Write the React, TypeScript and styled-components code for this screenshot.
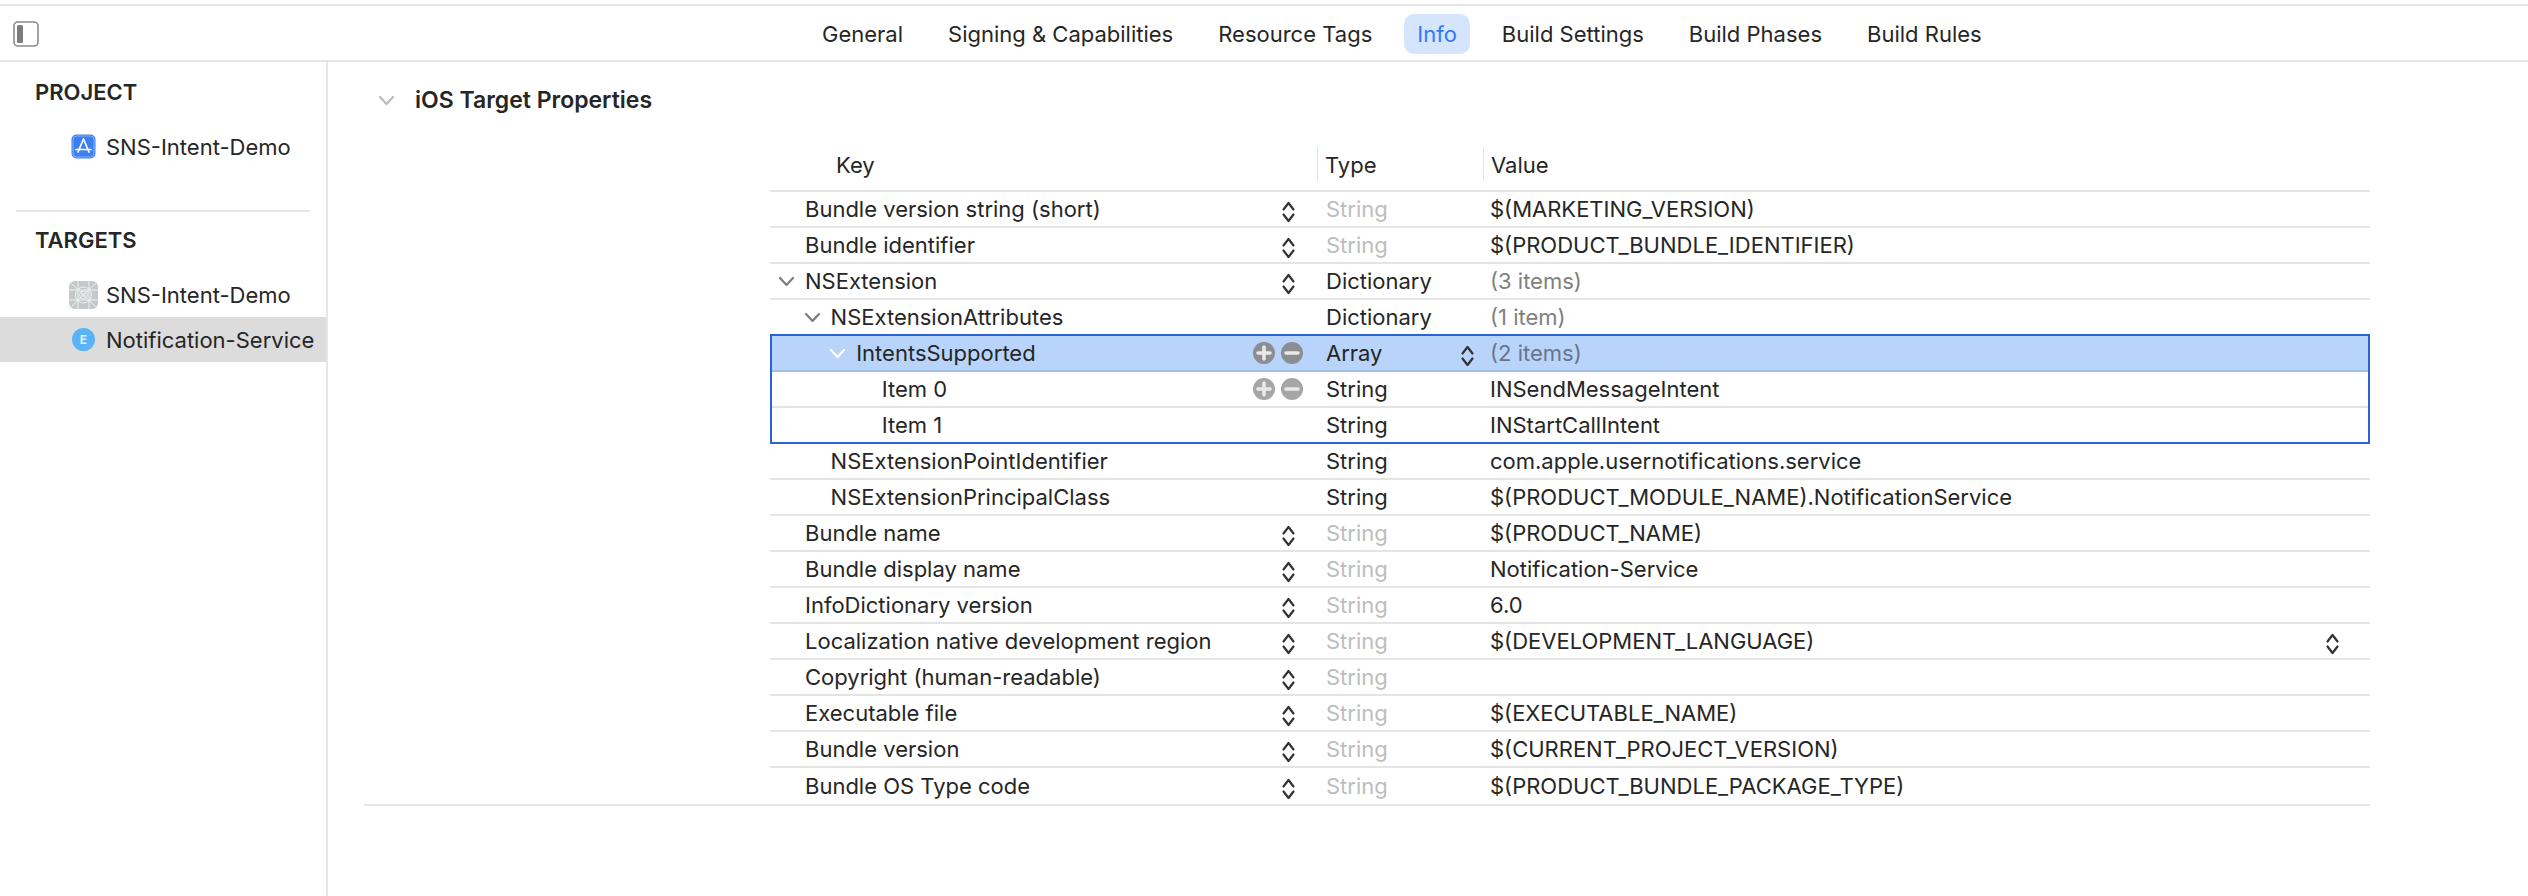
import React from "react";
import styled, { createGlobalStyle } from "styled-components";

const Global = createGlobalStyle`
  html, body { margin: 0; padding: 0; background: #fff; }
  body { font-family: Inter, "Noto Sans", "Liberation Sans", sans-serif; color: #262626; font-size: 22px; letter-spacing: 0; }
  * { box-sizing: border-box; }
`;

const Page = styled.div`
  width: 2528px;
  height: 896px;
  display: flex;
  flex-direction: column;
  padding-top: 4px;
  overflow: hidden;
`;

const Toolbar = styled.header`
  height: 58px;
  flex: none;
  border-top: 2px solid #e4e4e4;
  border-bottom: 2px solid #e4e4e4;
  display: flex;
  align-items: center;
  padding: 2px 0 0 13px;
`;

const ToggleBox = styled.svg`
  width: 26px;
  height: 26px;
  flex: none;
`;

const Tabs = styled.nav`
  display: flex;
  gap: 19px;
  margin-left: 770px;
`;

const Tab = styled.div<{ $active?: boolean }>`
  height: 40px;
  display: flex;
  align-items: center;
  padding: 0 13px;
  border-radius: 10px;
  white-space: nowrap;
  background: ${(p) => (p.$active ? "#d5e5fd" : "transparent")};
  color: ${(p) => (p.$active ? "#3478f6" : "#262626")};
`;

const Body = styled.div`
  flex: 1;
  display: flex;
  min-height: 0;
`;

const Sidebar = styled.aside`
  width: 328px;
  flex: none;
  border-right: 2px solid #e6e6e6;
  padding-top: 16px;
`;

const GroupLabel = styled.div`
  height: 28px;
  line-height: 28px;
  padding-left: 35px;
  margin-bottom: 18px;
  font-weight: 600;
`;

const SideItem = styled.div<{ $selected?: boolean }>`
  height: 45px;
  display: flex;
  align-items: center;
  gap: 8px;
  padding-left: 69px;
  white-space: nowrap;
  background: ${(p) => (p.$selected ? "#dcdcdc" : "transparent")};
`;

const IconSlot = styled.span`
  width: 29px;
  height: 29px;
  flex: none;
  display: flex;
  align-items: center;
  justify-content: center;
`;

const ExtensionBadge = styled.span`
  width: 23px;
  height: 23px;
  border-radius: 50%;
  background: #58b4f7;
  color: #d9efff;
  font-size: 12px;
  font-weight: 700;
  display: flex;
  align-items: center;
  justify-content: center;
`;

const SideDivider = styled.div`
  width: 294px;
  height: 2px;
  margin: 41px 0 14px 16px;
  background: #e6e6e6;
`;

const Main = styled.main`
  flex: 1;
  padding: 0 158px 0 36px;
`;

const Section = styled.section`
  border-bottom: 2px solid #e4e4e4;
`;

const SectionHead = styled.div`
  height: 86px;
  display: flex;
  align-items: center;
  padding: 0 0 10px 14px;
  gap: 20px;
  font-size: 23px;
  font-weight: 600;
`;

const Table = styled.div`
  margin-left: 406px;
`;

const HeadRow = styled.div`
  height: 44px;
  display: grid;
  grid-template-columns: 547px 166px 1fr;
  border-bottom: 2px solid #e4e4e4;
  padding-bottom: 10px;
`;

const HeadCell = styled.div<{ $first?: boolean }>`
  display: flex;
  align-items: center;
  padding: 2px 0 0 ${(p) => (p.$first ? "66px" : "7px")};
  border-left: ${(p) => (p.$first ? "none" : "1px solid #e4e4e4")};
`;

const Row = styled.div<{ $selected?: boolean; $last?: boolean }>`
  height: 36px;
  display: grid;
  grid-template-columns: 547px 166px 1fr;
  align-items: center;
  background: ${(p) => (p.$selected ? "#b8d4fb" : "transparent")};
  border-bottom: ${(p) =>
    p.$last ? "none" : `2px solid ${p.$selected ? "#a3bfe6" : "#e4e4e4"}`};
`;

const SelectionGroup = styled.div`
  position: relative;
  &::after {
    content: "";
    position: absolute;
    inset: -2px 0 0 0;
    border: 2px solid #2b62d9;
    pointer-events: none;
  }
`;

const KeyCell = styled.div<{ $level: number }>`
  display: flex;
  align-items: center;
  height: 100%;
  padding-left: ${(p) => 8 + p.$level * 25.6}px;
  white-space: nowrap;
`;

const ChevronSlot = styled.span`
  width: 27px;
  flex: none;
  display: flex;
  align-items: center;
`;

const KeyText = styled.span`
  flex: 1;
`;

const StepperWrap = styled.svg<{ $inset: number }>`
  width: 15px;
  height: 22px;
  flex: none;
  margin: 6px ${(p) => p.$inset}px 0 0;
`;

const TypeCell = styled.div<{ $muted?: boolean }>`
  display: flex;
  align-items: center;
  height: 100%;
  padding-left: 9px;
  color: ${(p) => (p.$muted ? "#bdbdbd" : "#262626")};
`;

const TypeText = styled.span`
  flex: 1;
`;

const ValueCell = styled.div<{ $count?: boolean; $selected?: boolean }>`
  display: flex;
  align-items: center;
  height: 100%;
  padding-left: 7px;
  white-space: nowrap;
  color: ${(p) => (p.$count ? (p.$selected ? "#69758a" : "#808080") : "#262626")};
`;

const ValueText = styled.span`
  flex: 1;
`;

const RoundControls = styled.span`
  display: flex;
  gap: 6px;
  margin-right: 14px;
`;

const RoundBtn = styled.svg`
  width: 22px;
  height: 22px;
  flex: none;
`;

const Stepper = ({ inset }: { inset: number }) => (
  <StepperWrap $inset={inset} viewBox="0 0 15 22" fill="none" stroke="#333" strokeWidth="2.2" strokeLinecap="round" strokeLinejoin="round">
    <path d="M2.5 8.5 L7.5 2 L12.5 8.5" />
    <path d="M2.5 13.5 L7.5 20 L12.5 13.5" />
  </StepperWrap>
);

const Chevron = ({ color }: { color: string }) => (
  <svg width="17" height="11" viewBox="0 0 17 11" fill="none" stroke={color} strokeWidth="2.2" strokeLinecap="round" strokeLinejoin="round">
    <path d="M2 2 L8.5 9 L15 2" />
  </svg>
);

const Round = ({ kind, color }: { kind: "plus" | "minus"; color: string }) => (
  <RoundBtn viewBox="0 0 22 22">
    <circle cx="11" cy="11" r="11" fill={color} />
    <path d={kind === "plus" ? "M5 11 H17 M11 5 V17" : "M5 11 H17"} stroke="#e9e9e9" strokeWidth="3.6" fill="none" strokeLinecap="round" />
  </RoundBtn>
);

const AppIcon = () => (
  <svg width="25" height="25" viewBox="0 0 25 25">
    <rect x="0.5" y="0.5" width="24" height="24" rx="5" fill="#3c7ff0" />
    <rect x="2" y="2" width="21" height="21" rx="3.5" fill="none" stroke="#a9c8f8" strokeWidth="0.7" />
    <path d="M12.5 5 L7 18 M12.5 5 L18 18 M5 15.5 H20" stroke="#fff" strokeWidth="1.7" fill="none" strokeLinecap="round" />
  </svg>
);

const TargetIcon = () => (
  <svg width="29" height="28" viewBox="0 0 29 28">
    <rect width="29" height="28" rx="6" fill="#c3c9ca" />
    <g fill="none" stroke="#eef0f0" strokeWidth="1">
      <circle cx="14.5" cy="14" r="4" />
      <circle cx="14.5" cy="14" r="8" />
      <circle cx="14.5" cy="14" r="1.6" />
      <path d="M0 0 L29 28 M29 0 L0 28 M9 0 V28 M20 0 V28 M0 9 H29 M0 19 H29" />
    </g>
  </svg>
);

type RowData = {
  key: string;
  level?: number;
  chevron?: boolean;
  stepper?: boolean;
  type: string;
  mutedType?: boolean;
  value?: string;
  count?: boolean;
  valueStepper?: boolean;
};

const before: RowData[] = [
  { key: "Bundle version string (short)", stepper: true, type: "String", mutedType: true, value: "$(MARKETING_VERSION)" },
  { key: "Bundle identifier", stepper: true, type: "String", mutedType: true, value: "$(PRODUCT_BUNDLE_IDENTIFIER)" },
  { key: "NSExtension", chevron: true, stepper: true, type: "Dictionary", value: "(3 items)", count: true },
  { key: "NSExtensionAttributes", level: 1, chevron: true, type: "Dictionary", value: "(1 item)", count: true },
];

const after: RowData[] = [
  { key: "NSExtensionPointIdentifier", level: 1, type: "String", value: "com.apple.usernotifications.service" },
  { key: "NSExtensionPrincipalClass", level: 1, type: "String", value: "$(PRODUCT_MODULE_NAME).NotificationService" },
  { key: "Bundle name", stepper: true, type: "String", mutedType: true, value: "$(PRODUCT_NAME)" },
  { key: "Bundle display name", stepper: true, type: "String", mutedType: true, value: "Notification-Service" },
  { key: "InfoDictionary version", stepper: true, type: "String", mutedType: true, value: "6.0" },
  { key: "Localization native development region", stepper: true, type: "String", mutedType: true, value: "$(DEVELOPMENT_LANGUAGE)", valueStepper: true },
  { key: "Copyright (human-readable)", stepper: true, type: "String", mutedType: true },
  { key: "Executable file", stepper: true, type: "String", mutedType: true, value: "$(EXECUTABLE_NAME)" },
  { key: "Bundle version", stepper: true, type: "String", mutedType: true, value: "$(CURRENT_PROJECT_VERSION)" },
  { key: "Bundle OS Type code", stepper: true, type: "String", mutedType: true, value: "$(PRODUCT_BUNDLE_PACKAGE_TYPE)" },
];

const PlainRow = ({ row, last }: { row: RowData; last?: boolean }) => (
  <Row $last={last}>
    <KeyCell $level={row.level ?? 0}>
      <ChevronSlot>{row.chevron && <Chevron color="#7d7d7d" />}</ChevronSlot>
      <KeyText>{row.key}</KeyText>
      {row.stepper && <Stepper inset={21} />}
    </KeyCell>
    <TypeCell $muted={row.mutedType}>
      <TypeText>{row.type}</TypeText>
    </TypeCell>
    <ValueCell $count={row.count}>
      <ValueText>{row.value}</ValueText>
      {row.valueStepper && <Stepper inset={30} />}
    </ValueCell>
  </Row>
);

const tabs = ["General", "Signing & Capabilities", "Resource Tags", "Info", "Build Settings", "Build Phases", "Build Rules"];

export default function App() {
  return (
    <Page>
      <Global />
      <Toolbar>
        <ToggleBox viewBox="0 0 26 26" fill="none">
          <rect x="1" y="1" width="24" height="24" rx="4" stroke="#8a8a8a" strokeWidth="1.6" />
          <rect x="4" y="4" width="6" height="18" rx="1.5" fill="#7c7c7c" />
        </ToggleBox>
        <Tabs>
          {tabs.map((t) => (
            <Tab key={t} $active={t === "Info"}>{t}</Tab>
          ))}
        </Tabs>
      </Toolbar>
      <Body>
        <Sidebar>
          <GroupLabel>PROJECT</GroupLabel>
          <SideItem>
            <IconSlot><AppIcon /></IconSlot>
            SNS-Intent-Demo
          </SideItem>
          <SideDivider />
          <GroupLabel>TARGETS</GroupLabel>
          <SideItem>
            <IconSlot><TargetIcon /></IconSlot>
            SNS-Intent-Demo
          </SideItem>
          <SideItem $selected>
            <IconSlot><ExtensionBadge>E</ExtensionBadge></IconSlot>
            Notification-Service
          </SideItem>
        </Sidebar>
        <Main>
          <Section>
            <SectionHead>
              <Chevron color="#bcbcbc" />
              iOS Target Properties
            </SectionHead>
            <Table>
              <HeadRow>
                <HeadCell $first>Key</HeadCell>
                <HeadCell>Type</HeadCell>
                <HeadCell>Value</HeadCell>
              </HeadRow>
              {before.map((r) => <PlainRow key={r.key} row={r} />)}
              <SelectionGroup>
                <Row $selected>
                  <KeyCell $level={2}>
                    <ChevronSlot><Chevron color="#ffffff" /></ChevronSlot>
                    <KeyText>IntentsSupported</KeyText>
                    <RoundControls>
                      <Round kind="plus" color="#8b8d90" />
                      <Round kind="minus" color="#8b8d90" />
                    </RoundControls>
                  </KeyCell>
                  <TypeCell>
                    <TypeText>Array</TypeText>
                    <Stepper inset={8} />
                  </TypeCell>
                  <ValueCell $count $selected>
                    <ValueText>(2 items)</ValueText>
                  </ValueCell>
                </Row>
                <Row>
                  <KeyCell $level={3}>
                    <ChevronSlot />
                    <KeyText>Item 0</KeyText>
                    <RoundControls>
                      <Round kind="plus" color="#a6a6a6" />
                      <Round kind="minus" color="#a6a6a6" />
                    </RoundControls>
                  </KeyCell>
                  <TypeCell><TypeText>String</TypeText></TypeCell>
                  <ValueCell><ValueText>INSendMessageIntent</ValueText></ValueCell>
                </Row>
                <Row>
                  <KeyCell $level={3}>
                    <ChevronSlot />
                    <KeyText>Item 1</KeyText>
                  </KeyCell>
                  <TypeCell><TypeText>String</TypeText></TypeCell>
                  <ValueCell><ValueText>INStartCallIntent</ValueText></ValueCell>
                </Row>
              </SelectionGroup>
              {after.map((r, i) => <PlainRow key={r.key} row={r} last={i === after.length - 1} />)}
            </Table>
          </Section>
        </Main>
      </Body>
    </Page>
  );
}
